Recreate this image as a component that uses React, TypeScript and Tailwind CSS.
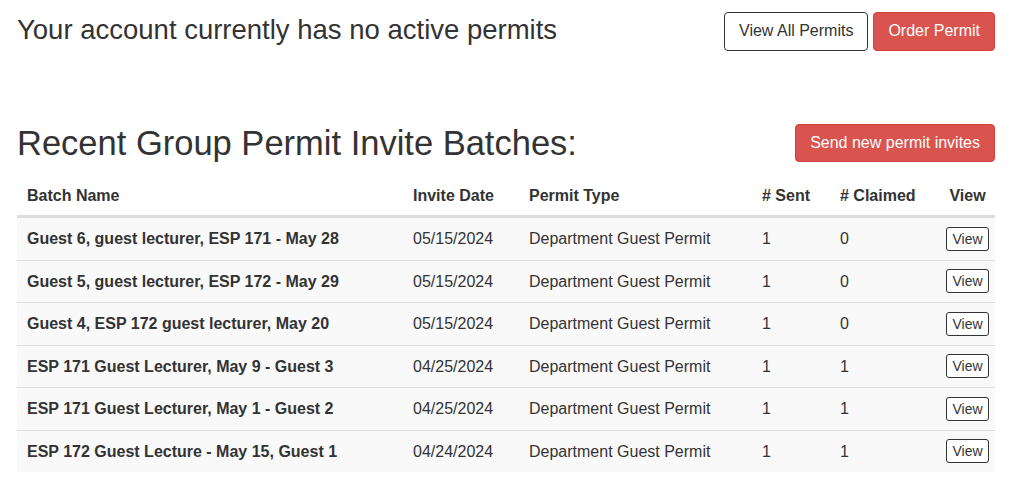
const batches = [
  { name: 'Guest 6, guest lecturer, ESP 171 - May 28', date: '05/15/2024', type: 'Department Guest Permit', sent: 1, claimed: 0 },
  { name: 'Guest 5, guest lecturer, ESP 172 - May 29', date: '05/15/2024', type: 'Department Guest Permit', sent: 1, claimed: 0 },
  { name: 'Guest 4, ESP 172 guest lecturer, May 20', date: '05/15/2024', type: 'Department Guest Permit', sent: 1, claimed: 0 },
  { name: 'ESP 171 Guest Lecturer, May 9 - Guest 3', date: '04/25/2024', type: 'Department Guest Permit', sent: 1, claimed: 1 },
  { name: 'ESP 171 Guest Lecturer, May 1 - Guest 2', date: '04/25/2024', type: 'Department Guest Permit', sent: 1, claimed: 1 },
  { name: 'ESP 172 Guest Lecture - May 15, Guest 1', date: '04/24/2024', type: 'Department Guest Permit', sent: 1, claimed: 1 },
]

export default function App() {
  return (
    <div className="min-h-screen bg-white text-[#333] pl-[17px] pr-[24px] font-['Liberation_Sans',Arial,sans-serif]">
      {/* Account status + actions */}
      <div className="flex justify-between items-start pt-[12px]">
        <h3 className="text-[27.5px] leading-[32px] font-normal pt-[2px]">
          Your account currently has no active permits
        </h3>
        <div className="flex gap-[5px]">
          <button className="bg-white border border-[#333] rounded-[4px] px-[14px] py-[7px] text-[16px] leading-[22.5px] text-[#333]">
            View All Permits
          </button>
          <button className="bg-[#d9534f] border border-[#d43f3a] rounded-[4px] px-[14px] py-[7px] text-[16px] leading-[22.5px] text-white">
            Order Permit
          </button>
        </div>
      </div>

      {/* Group invite batches */}
      <div className="flex justify-between items-start mt-[73px]">
        <h1 className="text-[34.5px] leading-[38px] font-normal">
          Recent Group Permit Invite Batches:
        </h1>
        <button className="bg-[#d9534f] border border-[#d43f3a] rounded-[4px] px-[14px] py-[7px] text-[16px] leading-[22.5px] text-white">
          Send new permit invites
        </button>
      </div>

      <table className="mt-[14px] w-[978px] table-fixed border-separate border-spacing-0 text-[16px]">
        <colgroup>
          <col className="w-[386px]" />
          <col className="w-[116px]" />
          <col className="w-[233px]" />
          <col className="w-[78px]" />
          <col className="w-[110px]" />
          <col className="w-[55px]" />
        </colgroup>
        <thead>
          <tr>
            <th className="text-left font-bold px-[10px] py-[8px] leading-[23px] border-b-2 border-[#ddd]">Batch Name</th>
            <th className="text-left font-bold px-[10px] py-[8px] leading-[23px] border-b-2 border-[#ddd]">Invite Date</th>
            <th className="text-left font-bold px-[10px] py-[8px] leading-[23px] border-b-2 border-[#ddd]">Permit Type</th>
            <th className="text-left font-bold px-[10px] py-[8px] leading-[23px] border-b-2 border-[#ddd]"># Sent</th>
            <th className="text-left font-bold px-[10px] py-[8px] leading-[23px] border-b-2 border-[#ddd]"># Claimed</th>
            <th className="text-center font-bold py-[8px] leading-[23px] border-b-2 border-[#ddd]">View</th>
          </tr>
        </thead>
        <tbody>
          {batches.map((b) => (
            <tr key={b.name} className="bg-[#f9f9f9]">
              <td className="px-[10px] py-[10px] leading-[21.5px] border-t border-[#ddd] font-bold whitespace-nowrap">{b.name}</td>
              <td className="px-[10px] py-[10px] leading-[21.5px] border-t border-[#ddd]">{b.date}</td>
              <td className="px-[10px] py-[10px] leading-[21.5px] border-t border-[#ddd] whitespace-nowrap">{b.type}</td>
              <td className="px-[10px] py-[10px] leading-[21.5px] border-t border-[#ddd]">{b.sent}</td>
              <td className="px-[10px] py-[10px] leading-[21.5px] border-t border-[#ddd]">{b.claimed}</td>
              <td className="py-[10px] border-t border-[#ddd]">
                <div className="flex justify-center items-center h-[21.5px]">
                  <button className="shrink-0 bg-white border border-[#333] rounded-[3px] px-[5px] py-[1px] text-[14px] leading-[20px] text-[#333]">
                    View
                  </button>
                </div>
              </td>
            </tr>
          ))}
        </tbody>
      </table>
    </div>
  )
}
